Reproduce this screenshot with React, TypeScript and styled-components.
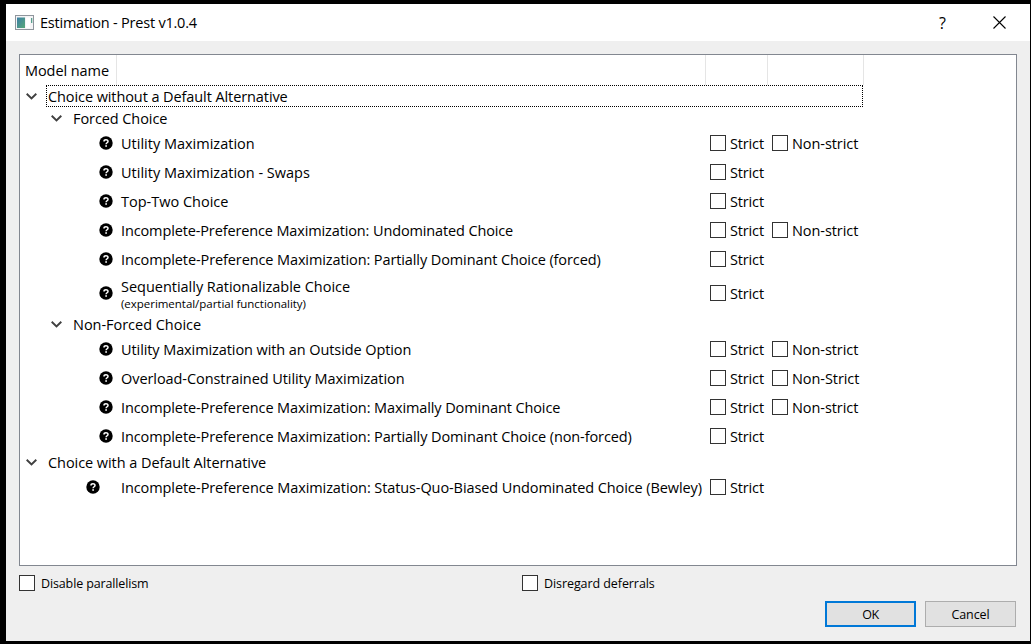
import React from 'react';
import styled, { createGlobalStyle } from 'styled-components';

const GlobalStyle = createGlobalStyle`
  * { box-sizing: border-box; }
  body { margin: 0; background: #000; }
`;

const Desktop = styled.div`
  width: 1031px;
  height: 644px;
  padding: 4px 1px 3px 6px;
  background: #000;
  font-family: 'Open Sans', 'Noto Sans', sans-serif;
  font-size: 14.5px;
  color: #000;
  overflow: hidden;
`;

const Dialog = styled.div`
  display: flex;
  flex-direction: column;
  height: 637px;
  background: #efefef;
`;

const TitleBar = styled.header`
  display: flex;
  align-items: center;
  height: 37px;
  padding: 0 24px 0 9px;
  background: #fff;
`;

const Text = styled.span<{ $ls?: number; $size?: number }>`
  display: block;
  white-space: pre;
  line-height: 20px;
  font-size: ${(p) => p.$size ?? 14.5}px;
  letter-spacing: ${(p) => p.$ls ?? 0}px;
`;

const Title = styled(Text)`
  flex: 1;
  margin-left: 6px;
`;

const HelpButton = styled(Text)`
  width: 8px;
  margin-right: 46px;
`;

const Body = styled.main`
  display: flex;
  flex-direction: column;
  padding: 13px 13px 0;
`;

const Tree = styled.section`
  height: 512px;
  border: 1px solid #828790;
  background: #fff;
`;

const HeaderRow = styled.div`
  display: flex;
  height: 30px;
`;

const HeaderCell = styled.div<{ $width: number }>`
  width: ${(p) => p.$width}px;
  padding: 6px 0 0 5px;
  border-right: 1px solid #e5e5e5;
`;

const GroupRow = styled.div<{ $indent: number }>`
  display: flex;
  align-items: center;
  height: 22px;
  padding-left: ${(p) => p.$indent}px;
`;

const GroupLabel = styled.div<{ $focused?: boolean }>`
  width: 817px;
  height: 22px;
  margin-left: 9px;
  padding: 1px 0 0 1px;
  border: 1px dotted ${(p) => (p.$focused ? '#000' : 'transparent')};
`;

const ModelRow = styled.div<{ $tall?: boolean }>`
  display: grid;
  grid-template-columns: 101px 589px 62px 96px;
  align-items: center;
  height: ${(p) => (p.$tall ? 39 : 29)}px;
`;

const HelpCell = styled.div<{ $outdent?: boolean }>`
  display: flex;
  justify-content: flex-end;
  padding: 0 ${(p) => (p.$outdent ? 21 : 8)}px 1px 0;
`;

const Caption = styled.div`
  display: flex;
  flex-direction: column;
`;

const Note = styled(Text)`
  line-height: 14px;
  height: 14px;
`;

const Check = styled.label<{ $gap?: number }>`
  display: flex;
  align-items: center;
  gap: ${(p) => p.$gap ?? 4}px;
`;

const Box = styled.span<{ $lift?: number }>`
  flex: none;
  width: 16px;
  height: 16px;
  margin-bottom: ${(p) => p.$lift ?? 1}px;
  border: 1px solid #333;
  background: #fff;
`;

const Options = styled.div`
  display: grid;
  grid-template-columns: 503px auto;
  height: 18px;
  margin-top: 8px;
`;

const Buttons = styled.footer`
  display: flex;
  justify-content: flex-end;
  gap: 9px;
  margin-top: 9px;
  padding-right: 1px;
`;

const Button = styled.button<{ $primary?: boolean }>`
  display: flex;
  align-items: center;
  justify-content: center;
  width: 91px;
  height: 26px;
  padding: ${(p) => (p.$primary ? 1 : 2)}px 0 0;
  border: ${(p) => (p.$primary ? '2px solid #0078d7' : '1px solid #adadad')};
  background: #e1e1e1;
  color: #000;
  font-family: inherit;
`;

const AppIcon = () => (
  <svg width="19" height="15" viewBox="0 0 19 15">
    <defs>
      <linearGradient id="pane" x1="0" y1="0" x2="1" y2="1">
        <stop offset="0" stopColor="#3c7fa6" />
        <stop offset="1" stopColor="#58a878" />
      </linearGradient>
    </defs>
    <rect x="0.5" y="0.5" width="18" height="14" fill="#f4f4f6" stroke="#8f959c" />
    <rect x="2" y="2.5" width="8" height="10.5" fill="url(#pane)" />
    <rect x="11" y="2.5" width="4" height="10.5" fill="#fff" />
    <rect x="16" y="3" width="1.3" height="5" fill="#5a9f8e" />
  </svg>
);

const CloseIcon = () => (
  <svg width="13" height="13" viewBox="0 0 13 13" stroke="#000" strokeWidth="1.1">
    <path d="M0.5 0.5 12.5 12.5M12.5 0.5 0.5 12.5" />
  </svg>
);

const Chevron = () => (
  <svg width="11" height="8" viewBox="0 0 11 8" fill="none" stroke="#404040" strokeWidth="1.9">
    <path d="M0.7 1.7 5.5 6.4 10.3 1.7" />
  </svg>
);

const HelpIcon = () => (
  <svg width="14" height="14" viewBox="0 0 14 14">
    <circle cx="7" cy="7" r="6.7" fill="#000" />
    <path d="M5 5.5C5 3.3 9 3.3 9 5.4 9 6.8 7.1 6.7 7.1 8.3" fill="none" stroke="#fff" strokeWidth="1.5" />
    <rect x="6.3" y="9.2" width="1.6" height="1.6" fill="#fff" />
  </svg>
);

interface ModelProps {
  name: string;
  ls?: number;
  note?: string;
  second?: string;
  outdent?: boolean;
}

const Model = ({ name, ls, note, second, outdent }: ModelProps) => (
  <ModelRow $tall={!!note}>
    <HelpCell $outdent={outdent}>
      <HelpIcon />
    </HelpCell>
    <Caption>
      <Text $ls={ls}>{name}</Text>
      {note && <Note $size={11.5} $ls={-0.03}>{note}</Note>}
    </Caption>
    <Check>
      <Box />
      <Text $ls={-0.15}>Strict</Text>
    </Check>
    {second && (
      <Check>
        <Box />
        <Text $ls={-0.07}>{second}</Text>
      </Check>
    )}
  </ModelRow>
);

interface GroupProps {
  name: string;
  indent: number;
  focused?: boolean;
  ls?: number;
}

const Group = ({ name, indent, focused, ls }: GroupProps) => (
  <GroupRow $indent={indent}>
    <Chevron />
    <GroupLabel $focused={focused}>
      <Text $ls={ls}>{name}</Text>
    </GroupLabel>
  </GroupRow>
);

export default function App() {
  return (
    <Desktop>
      <GlobalStyle />
      <Dialog>
        <TitleBar>
          <AppIcon />
          <Title $ls={-0.22}>Estimation - Prest v1.0.4</Title>
          <HelpButton $size={16}>?</HelpButton>
          <CloseIcon />
        </TitleBar>
        <Body>
          <Tree>
            <HeaderRow>
              <HeaderCell $width={97}>
                <Text $ls={-0.07}>Model name</Text>
              </HeaderCell>
              <HeaderCell $width={589} />
              <HeaderCell $width={62} />
              <HeaderCell $width={96} />
            </HeaderRow>
            <Group name="Choice without a Default Alternative" indent={6} ls={-0.09} focused />
            <Group name="Forced Choice" indent={31} ls={-0.08} />
            <Model name="Utility Maximization" second="Non-strict" />
            <Model name="Utility Maximization - Swaps" />
            <Model name="Top-Two Choice" />
            <Model
              name="Incomplete-Preference Maximization: Undominated Choice"
              ls={-0.13}
              second="Non-strict"
            />
            <Model
              name="Incomplete-Preference Maximization: Partially Dominant Choice (forced)"
              ls={-0.105}
            />
            <Model
              name="Sequentially Rationalizable Choice"
              ls={-0.02}
              note="(experimental/partial functionality)"
            />
            <Group name="Non-Forced Choice" indent={31} ls={-0.03} />
            <Model name="Utility Maximization with an Outside Option" ls={-0.09} second="Non-strict" />
            <Model name="Overload-Constrained Utility Maximization" ls={-0.07} second="Non-Strict" />
            <Model
              name="Incomplete-Preference Maximization: Maximally Dominant Choice"
              ls={-0.1}
              second="Non-strict"
            />
            <Model
              name="Incomplete-Preference Maximization: Partially Dominant Choice (non-forced)"
              ls={-0.1}
            />
            <Group name="Choice with a Default Alternative" indent={6} ls={-0.06} />
            <Model
              name="Incomplete-Preference Maximization: Status-Quo-Biased Undominated Choice (Bewley)"
              ls={-0.093}
              outdent
            />
          </Tree>
          <Options>
            <Check $gap={6}>
              <Box $lift={3} />
              <Text $size={12.5} $ls={-0.13}>Disable parallelism</Text>
            </Check>
            <Check $gap={6}>
              <Box $lift={3} />
              <Text $size={12.5} $ls={-0.08}>Disregard deferrals</Text>
            </Check>
          </Options>
          <Buttons>
            <Button $primary>
              <Text $size={12.5} $ls={-0.4}>OK</Text>
            </Button>
            <Button>
              <Text $size={12.5} $ls={-0.1}>Cancel</Text>
            </Button>
          </Buttons>
        </Body>
      </Dialog>
    </Desktop>
  );
}
